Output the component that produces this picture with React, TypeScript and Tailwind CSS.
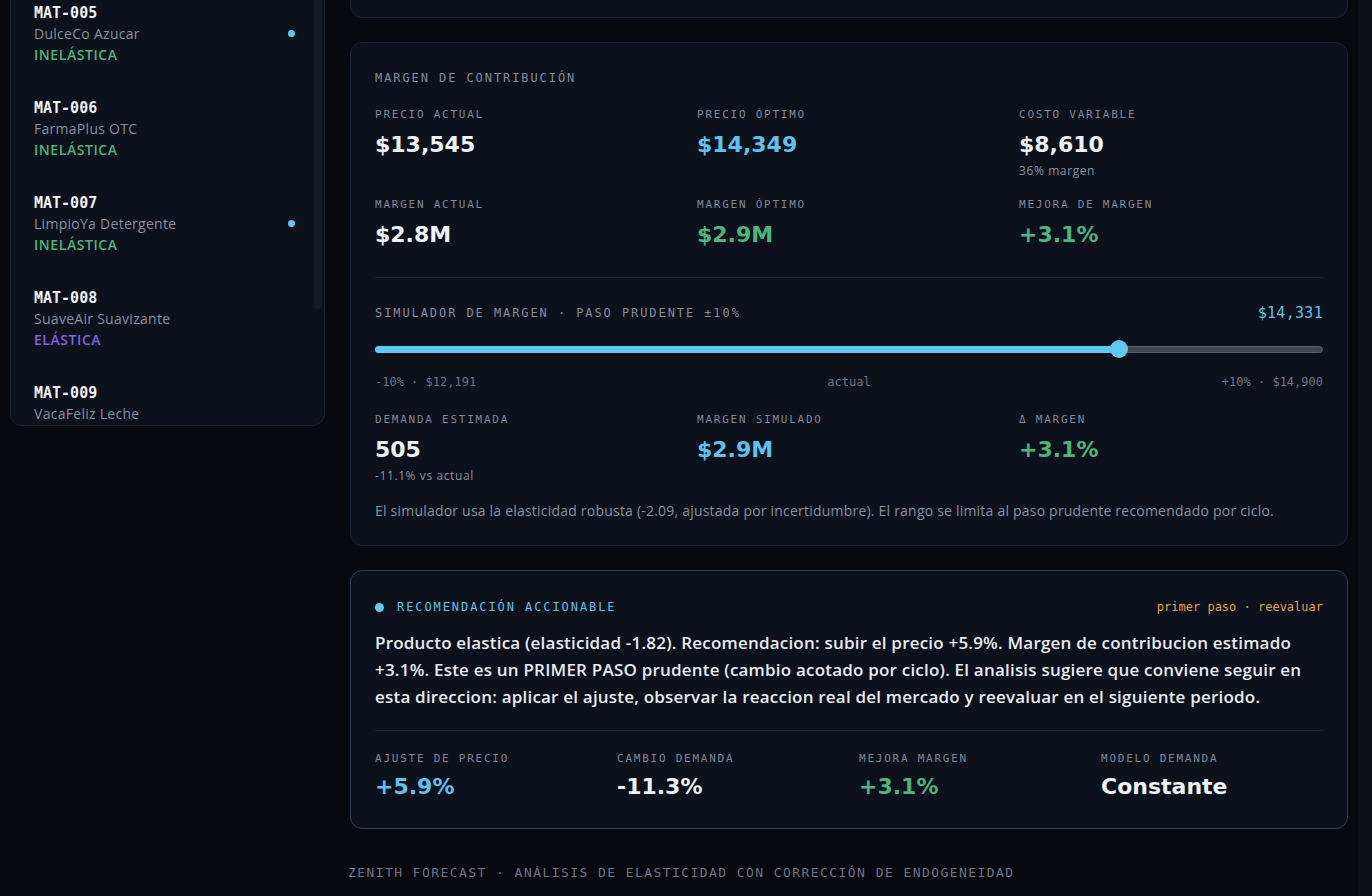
import React from "react";

type Item = { id: string; name: string; tag: "INELÁSTICA" | "ELÁSTICA"; flag?: boolean };

const items: Item[] = [
  { id: "MAT-001", name: "AguaPura Mineral", tag: "ELÁSTICA" },
  { id: "MAT-002", name: "CafeSol Molido", tag: "INELÁSTICA" },
  { id: "MAT-003", name: "PanDorado Molde", tag: "ELÁSTICA", flag: true },
  { id: "MAT-004", name: "ArrozFino Grado 1", tag: "INELÁSTICA" },
  { id: "MAT-005", name: "DulceCo Azucar", tag: "INELÁSTICA", flag: true },
  { id: "MAT-006", name: "FarmaPlus OTC", tag: "INELÁSTICA" },
  { id: "MAT-007", name: "LimpioYa Detergente", tag: "INELÁSTICA", flag: true },
  { id: "MAT-008", name: "SuaveAir Suavizante", tag: "ELÁSTICA" },
  { id: "MAT-009", name: "VacaFeliz Leche", tag: "INELÁSTICA" },
  { id: "MAT-010", name: "CrocanteMix Snacks", tag: "ELÁSTICA" },
];

const mono = "font-['DejaVu_Sans_Mono',monospace]";
const display = "font-['DejaVu_Sans',sans-serif] font-bold";
const body = "font-['Open_Sans',sans-serif]";

const Label = ({ children }: { children: React.ReactNode }) => (
  <p className={`${mono} text-[11px] leading-[16px] tracking-[0.16em] text-[#7f8799] uppercase`}>
    {children}
  </p>
);

const Stat = ({
  label,
  value,
  color,
  sub,
}: {
  label: string;
  value: string;
  color: string;
  sub?: string;
}) => (
  <div>
    <Label>{label}</Label>
    <p className={`${display} mt-2 text-[22px] leading-[28px] ${color}`}>{value}</p>
    {sub && (
      <p className={`${body} mt-1 text-[12px] leading-[16px] tracking-[0.05em] text-[#8a91a1]`}>
        {sub}
      </p>
    )}
  </div>
);

const Sidebar = () => (
  <aside className="w-[315px] shrink-0">
    <div className="-mt-[60px] h-[486px] rounded-xl border border-[#1b2233] bg-[#0c111b] overflow-hidden flex">
      <ul className="flex-1 -mt-[334px]">
        {items.map((it) => (
          <li key={it.id} className="pl-[23px] pr-[19px] pt-[15px] pb-[16px] flex items-center">
            <div className="flex-1">
              <p className={`${mono} font-bold text-[15px] leading-[21px] pt-px text-[#eef1f6]`}>{it.id}</p>
              <p className={`${body} text-[14px] leading-[20px] tracking-[0.02em] text-[#8a90a0]`}>
                {it.name}
              </p>
              <p
                className={`${body} font-semibold text-[14px] leading-[22px] tracking-[0.04em] ${
                  it.tag === "ELÁSTICA" ? "text-[#8360e6]" : "text-[#4cb57c]"
                }`}
              >
                {it.tag}
              </p>
            </div>
            {it.flag && <span className="w-[7px] h-[7px] rounded-full bg-[#5ec8f2] -mt-[1px]" />}
          </li>
        ))}
      </ul>
      <div className="w-[8px] mr-[2px]">
        <div className="h-[368px] rounded-full bg-[#161c28]" />
      </div>
    </div>
  </aside>
);

const Slider = ({ min, max, value }: { min: number; max: number; value: number }) => {
  const pct = ((value - min) / (max - min)) * 100;
  const left = `calc(${pct}% - ${(pct * 18) / 100}px)`;
  return (
    <div className="relative mt-[17px] h-[18px] flex items-center">
      <div className="w-full h-[7px] rounded-full bg-[#44474d] border border-[#5c6066]" />
      <div
        className="absolute left-0 h-[7px] rounded-full bg-[#5ec8f2]"
        style={{ width: `calc(${left} + 9px)` }}
      />
      <div className="absolute w-[18px] h-[18px] rounded-full bg-[#5ec8f2]" style={{ left }} />
    </div>
  );
};

const MarginCard = () => (
  <section className="rounded-xl border border-[#1b2233] bg-[#0c111b] px-6 pt-[25px] pb-6">
    <p className={`${mono} text-[12px] leading-[20px] tracking-[0.16em] text-[#858d9e]`}>
      MARGEN DE CONTRIBUCIÓN
    </p>
    <div className="mt-[19px] grid grid-cols-3 gap-x-[18px] gap-y-[18px]">
      <Stat label="Precio actual" value="$13,545" color="text-[#eef1f6]" />
      <Stat label="Precio óptimo" value="$14,349" color="text-[#5ec4ee]" />
      <Stat label="Costo variable" value="$8,610" color="text-[#eef1f6]" sub="36% margen" />
      <Stat label="Margen actual" value="$2.8M" color="text-[#eef1f6]" />
      <Stat label="Margen óptimo" value="$2.9M" color="text-[#4cb57c]" />
      <Stat label="Mejora de margen" value="+3.1%" color="text-[#4cb57c]" />
    </div>
    <div className="mt-[28px] h-px bg-[#1d2538]" />
    <div className="mt-[25px] flex items-center justify-between">
      <p className={`${mono} text-[12px] leading-[20px] tracking-[0.16em] text-[#858d9e]`}>
        SIMULADOR DE MARGEN · PASO PRUDENTE ±10%
      </p>
      <p className={`${mono} text-[15px] leading-[20px] tracking-[0.02em] text-[#5ec4ee]`}>$14,331</p>
    </div>
    <Slider min={12191} max={14900} value={14331} />
    <div className={`${mono} mt-4 grid grid-cols-3 text-[12px] leading-[16px] text-[#6c7486]`}>
      <span>-10% · $12,191</span>
      <span className="text-center">actual</span>
      <span className="text-right">+10% · $14,900</span>
    </div>
    <div className="mt-[22px] grid grid-cols-3 gap-x-[18px]">
      <Stat label="Demanda estimada" value="505" color="text-[#eef1f6]" sub="-11.1% vs actual" />
      <Stat label="Margen simulado" value="$2.9M" color="text-[#5ec4ee]" />
      <Stat label="Δ margen" value="+3.1%" color="text-[#4cb57c]" />
    </div>
    <p className={`${body} mt-[17px] text-[14px] leading-[20px] tracking-[0.015em] text-[#8a91a1]`}>
      El simulador usa la elasticidad robusta (-2.09, ajustada por incertidumbre). El rango se limita al
      paso prudente recomendado por ciclo.
    </p>
  </section>
);

const RecCard = () => (
  <section className="rounded-xl border border-[#2b3e4f] bg-[#0c111b] px-6 pt-[26px] pb-[25px]">
    <div className="flex items-center justify-between">
      <div className="flex items-center gap-[13px]">
        <span className="w-[9px] h-[9px] rounded-full bg-[#5ec8f2]" />
        <p className={`${mono} text-[12px] leading-[20px] tracking-[0.16em] text-[#5ec4ee]`}>
          RECOMENDACIÓN ACCIONABLE
        </p>
      </div>
      <p className={`${mono} text-[12px] leading-[20px] text-[#e3a354]`}>primer paso · reevaluar</p>
    </div>
    <p className={`${body} mt-3 text-[17px] leading-[27px] tracking-[0.012em] font-semibold text-[#e8ebf1]`}>
      Producto elastica (elasticidad -1.82). Recomendacion: subir el precio +5.9%. Margen de contribucion
      estimado +3.1%. Este es un PRIMER PASO prudente (cambio acotado por ciclo). El analisis sugiere que
      conviene seguir en esta direccion: aplicar el ajuste, observar la reaccion real del mercado y
      reevaluar en el siguiente periodo.
    </p>
    <div className="mt-5 h-px bg-[#1d2538]" />
    <div className="mt-5 grid grid-cols-4 gap-x-5">
      {[
        ["Ajuste de precio", "+5.9%", "text-[#5ec4ee]"],
        ["Cambio demanda", "-11.3%", "text-[#eef1f6]"],
        ["Mejora margen", "+3.1%", "text-[#4cb57c]"],
        ["Modelo demanda", "Constante", "text-[#eef1f6]"],
      ].map(([l, v, c]) => (
        <div key={l}>
          <Label>{l}</Label>
          <p className={`${display} mt-1 text-[22px] leading-[32px] ${c}`}>{v}</p>
        </div>
      ))}
    </div>
  </section>
);

export default function App() {
  return (
    <div className="h-[896px] overflow-hidden bg-[#07090e] flex">
      <div className="flex-1 flex gap-[25px] px-[10px]">
        <Sidebar />
        <main className="flex-1 flex flex-col gap-6">
          <section className="-mt-[100px] h-[118px] shrink-0 rounded-xl border border-[#1b2233] bg-[#0c111b]" />
          <MarginCard />
          <RecCard />
          <footer
            className={`${mono} mt-[10px] -ml-[2px] text-[13px] leading-[20px] tracking-[0.11em] text-[#6c7486]`}
          >
            ZENITH FORECAST · ANÁLISIS DE ELASTICIDAD CON CORRECCIÓN DE ENDOGENEIDAD
          </footer>
        </main>
      </div>
      <div className="w-[14px] bg-[#0e1117]" />
    </div>
  );
}
